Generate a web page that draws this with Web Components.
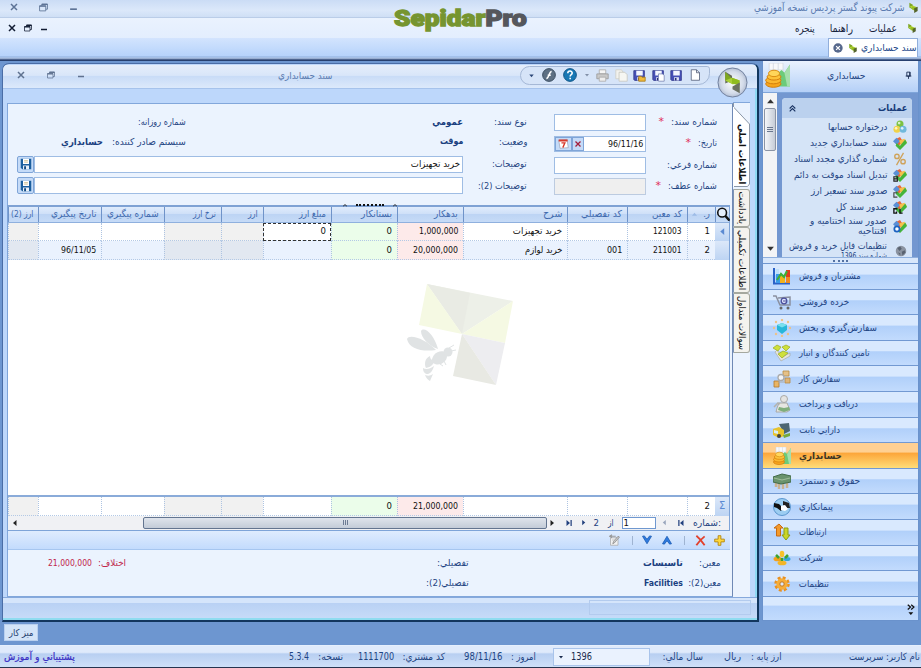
<!DOCTYPE html>
<html lang="fa">
<head>
<meta charset="utf-8">
<title>Sepidar</title>
<style>
  html, body { margin: 0; height: 100%; overflow: hidden; }
  body { font: 9.5px/12px "DejaVu Sans Condensed", "DejaVu Sans", sans-serif; color: #1f4583; }
</style>
</head>
<body>
<sepidar-app></sepidar-app>

<script>
const floppy = `<path d="M1 2h13v12H2l-1-1z" fill="#4650b5" stroke="#343a8c"/><path d="M4 2h8v6H4z" fill="#f3f6ff"/><path d="M5 10h6v4H5z" fill="#dfe4f5"/><path d="M6 11h2v3H6z" fill="#2a2f7c"/>`;
const ledger = `<path d="M2 4l6-3 4 6-6 4z" fill="#e8663c"/><path d="M0 6l4-4 4 4-4 4z" fill="#5b8fd6"/><path d="M7 5l6-2 3 4-6 6z" fill="#f4c04a"/><path d="M4 8l4 3 6-7 2 4-8 8-5-5z" fill="#45b53a"/>`;

const ICONS = {
  logo: `<path d="M2 1l5 3v7l-5-3z" fill="#7ea624"/><path d="M2 7l5-2 7 3-4 3z" fill="#b3d335"/><path d="M6 6l5 2v5l-5-2z" fill="#97c022"/><path d="M9 9l5-2v6l-5 3z" fill="#55652c"/>`,
  orb: `<defs><radialGradient id="g"><stop offset="0" stop-color="#fff"/><stop offset=".75" stop-color="#d3dbe9"/><stop offset="1" stop-color="#b5c0d4"/></radialGradient></defs><circle cx="16" cy="16" r="15" fill="url(#g)" stroke="#6f7f9d"/><path d="M8.500 5l7 4v5l-7 3z" fill="#666d5c"/><path d="M8.500 5v9l7 3v-5z" fill="#7fa81e"/><path d="M8.500 14l7-3 8 3-7 4z" fill="#a9cf38"/><path d="M15.500 11l8 3v5l-8-2z" fill="#8fbc1f"/><path d="M16 20l7.500-4v11l-7.500-4z" fill="#6b7162"/>`,
  pin: `<path d="M5 2h6v7H5zM3 9h10M8 9v5M10 2v7" fill="none" stroke="#1c2f55" stroke-width="1.6"/>`,
  doc: `<path d="M3 1h7l4 4v10H3z" fill="#fff" stroke="#46516d"/><path d="M10 1v4h4" fill="none" stroke="#46516d"/>`,
  save: floppy,
  saveDoc: floppy + `<path d="M8 6h5l2 2v7H8z" fill="#fff" stroke="#7a86b5"/>`,
  saveFolder: floppy + `<path d="M7 9h3l1 1h4v5H7z" fill="#f0b93a" stroke="#a87b1b"/>`,
  copy: `<path d="M1 1h7l2 3v8H1z" fill="#f2f2ee" stroke="#cfcfc8"/><path d="M5 4h7l3 3v8H5z" fill="#f6f6f2" stroke="#c6c6bf"/>`,
  print: `<path d="M4 1h8v5H4z" fill="#f5f5f5" stroke="#aaa"/><path d="M1 6h14v6H1z" fill="#c9c9c9" stroke="#999"/><path d="M4 10h8v5H4z" fill="#eee" stroke="#aaa"/>`,
  help: `<circle cx="8" cy="8" r="7.3" fill="#1878b4" stroke="#0c4f80"/><path d="M5.5 6c0-3.4 5-3.2 5-.4 0 2-2.3 1.8-2.3 4M8.2 11.2v1.6" fill="none" stroke="#fff" stroke-width="1.8"/>`,
  flash: `<circle cx="8" cy="8" r="7.3" fill="#5d7084" stroke="#34475c"/><path d="M11 4c-3 0-3 8-6 8M6.5 8.3h3.5" fill="none" stroke="#fff" stroke-width="1.8"/>`,
  down: `<path d="M4 6h8l-4 5z" fill="currentColor"/>`,
  right: `<path d="M5 2l7 6-7 6z" fill="currentColor"/>`,
  left: `<path d="M11 2l-7 6 7 6z" fill="currentColor"/>`,
  upTri: `<path d="M2 11h12L8 4z" fill="currentColor"/>`,
  downTri: `<path d="M2 5h12l-6 7z" fill="currentColor"/>`,
  last: `<path d="M3 2l7 6-7 6zM11 2h2.5v12H11z" fill="currentColor"/>`,
  first: `<path d="M13 2L6 8l7 6zM2.5 2H5v12H2.5z" fill="currentColor"/>`,
  close: `<path d="M2 2l12 12M14 2L2 14" stroke="currentColor" stroke-width="3"/>`,
  restore: `<path d="M5 5V2h10v9h-3M1 5h11v9H1z" fill="none" stroke="currentColor" stroke-width="1.5"/><path d="M1 5.5h11M5 2.5h10" stroke="currentColor" stroke-width="2.5"/>`,
  min: `<path d="M2 11h12" stroke="currentColor" stroke-width="3"/>`,
  closeDot: `<circle cx="8" cy="8" r="7.5" fill="#56688c"/><path d="M5 5l6 6M11 5l-6 6" stroke="#fff" stroke-width="2"/>`,
  chevUp: `<path d="M3 8l5-5 5 5M3 13l5-5 5 5" fill="none" stroke="#16305f" stroke-width="2"/>`,
  search: `<circle cx="7" cy="6.5" r="5" fill="#e5effd" stroke="#111" stroke-width="1.8"/><path d="M10.5 10l5 5.5" stroke="#111" stroke-width="2.8"/>`,
  disk: `<path d="M1 1h14v14H3l-2-2z" fill="#1c5f9e"/><path d="M4 1h8v7H4z" fill="#fff"/><path d="M5.5 3.5h5M5.5 5.5h5" stroke="#c6b37c"/><path d="M4 10h8v5H4z" fill="#e8f0fa"/><path d="M5.5 11h2.5v4H5.5z" fill="#134a80"/>`,
  calendar: `<path d="M1 3l12-1 2 12-12 1z" fill="#fff" stroke="#9a9fb4"/><path d="M1 2h13v3H1z" fill="#d8392c"/><path d="M5 7h5l-3 7" fill="none" stroke="#d8392c" stroke-width="2"/>`,
  redX: `<path d="M3 3l10 10M13 3L3 13" stroke="#a31f3c" stroke-width="2.6"/>`,
  plus: `<path d="M6 1h4v5h5v4h-5v5H6v-5H1V6h5z" fill="#ffd83c" stroke="#b28410" stroke-width="1.3"/>`,
  del: `<path d="M2 1c5 4 8 8 12 14M14 2C9 6 5 10 2 15" fill="none" stroke="#e2402c" stroke-width="2.6"/>`,
  up: `<path d="M2 13L8 3l6 10-2.500.500L8 9l-3.500 4.500z" fill="#2f7be0" stroke="#1757ae"/>`,
  dn: `<path d="M2 3l6 10 6-10-2.500-.500L8 7 4.500 2.500z" fill="#2f7be0" stroke="#1757ae"/>`,
  edit: `<path d="M2 5h10v10H2z" fill="#f1f1f1" stroke="#aaa"/><path d="M1 3h8M4 1L1 3l3 2" fill="none" stroke="#999" stroke-width="1.5"/><path d="M14 4l-7 8-2 1 1-3 6-7z" fill="#ccc" stroke="#888"/><path d="M4 8h5" stroke="#bbb"/>`,
  balls: `<circle cx="8" cy="4.5" r="4" fill="#7cc142"/><circle cx="4.5" cy="10.5" r="4" fill="#f0d24a"/><circle cx="11.5" cy="10.5" r="4" fill="#6fb8dc"/><circle cx="7" cy="3.5" r="1.5" fill="#d8f2c0"/><circle cx="3.5" cy="9.5" r="1.5" fill="#fff5c0"/><circle cx="10.5" cy="9.5" r="1.5" fill="#dff3fc"/>`,
  ledger,
  percent: `<circle cx="4.5" cy="5" r="2.5" fill="none" stroke="#cfa35c" stroke-width="1.6"/><circle cx="11.5" cy="11" r="2.5" fill="none" stroke="#cfa35c" stroke-width="1.6"/><path d="M12 1L4 15" stroke="#cfa35c" stroke-width="1.5"/>`,
  ledgerB: ledger + `<path d="M1 10h4v5H1zM1 12.500h4" fill="none" stroke="#222" stroke-width="1.3"/>`,
  ledgerC: ledger + `<path d="M5 10H1v5h4" fill="none" stroke="#444" stroke-width="1.3"/>`,
  ledgerG: ledger + `<path d="M5 10H1v5h3v-2M8 10v5h3" fill="none" stroke="#111" stroke-width="1.5"/>`,
  ledgerO: ledger + `<circle cx="4.5" cy="11.5" r="3" fill="#fff" stroke="#1d63c0" stroke-width="2"/>`,
  globe: `<circle cx="8" cy="8" r="7" fill="#8b93a0"/><path d="M3 4l4-2 2 3-3 3zM9 9l4-2 1 3-4 4zM4 10l3 1v3z" fill="#596270"/>`,
  coins: `<path d="M3 0h10v12H3z" fill="#f8f9fb" stroke="#d3d9e2" stroke-width=".6"/><path d="M6 0v12M9.500 0v12M3 5h10" stroke="#d3d9e2" stroke-width=".6"/><path d="M8 17V8l4-3 2 2 4-6v16z" fill="#6ccb7a"/><path d="M14 7l4-6v16h-2z" fill="#a5dfac"/><ellipse cx="6" cy="15" rx="5.5" ry="2.5" fill="#f7a51c" stroke="#d27d0c" stroke-width=".7"/><ellipse cx="6" cy="12.5" rx="5.5" ry="2.5" fill="#fbb830" stroke="#d27d0c" stroke-width=".7"/><ellipse cx="6.500" cy="10" rx="5" ry="2.300" fill="#fcc23a" stroke="#d27d0c" stroke-width=".7"/><ellipse cx="6.500" cy="7.500" rx="4" ry="2.300" fill="#ffd65a" stroke="#d98b10" stroke-width=".7"/>`,
  chart: `<path d="M1 1v15.500h16" fill="none" stroke="#2a62c8" stroke-width="2"/><path d="M2.500 2H6v5H2.500z" fill="#bfe0fa"/><path d="M3 7h4v9H3z" fill="#3a9be8"/><path d="M7 9h5v7H7z" fill="#f2b21c"/><path d="M13 3h4v7h-4z" fill="#e03c1c"/><path d="M13 10h4v6h-4z" fill="#f08a1c"/><path d="M4 13l4-6 3 3 3-6" fill="none" stroke="#3fae35" stroke-width="2.2"/>`,
  cart: `<path d="M0 3l3 0 4 9h9M5 5l12-1v8H8" fill="none" stroke="#8a90a0" stroke-width="1.5"/><circle cx="11" cy="8" r="2.8" fill="#dfe3fa" stroke="#4b4f9c" stroke-width="1.3"/><path d="M10 8h3" stroke="#4b4f9c"/><circle cx="8" cy="15" r="1.5" fill="#666"/><circle cx="15" cy="15" r="1.5" fill="#666"/>`,
  spread: `<path d="M4 6l5-2 5 2v5l-5 4-5-4z" fill="#27b7da"/><path d="M4 6l5 2.500L14 6 9 4z" fill="#7ae0ee"/><g fill="#ecc288"><circle cx="9" cy="1" r="1.2"/><circle cx="3" cy="3" r="1.2"/><circle cx="15" cy="3" r="1.2"/><circle cx="1" cy="9" r="1.2"/><circle cx="17" cy="9" r="1.2"/><circle cx="3" cy="15" r="1.2"/><circle cx="15" cy="15" r="1.2"/><circle cx="9" cy="17" r="1.2"/></g>`,
  boxes: `<path d="M2 8l6 9 9-5v-3L9 13 4 6z" fill="#e4e4dc" stroke="#a5a59c" stroke-width=".6"/><path d="M0 4l4-3 4 2-3 4zM9 3l4-2 4 2-4 4zM5 10l5-3 5 2-6 5z" fill="#cfe03c" stroke="#9aac1f" stroke-width=".7"/>`,
  order: `<path d="M10 1h6v5h-6z" fill="#e5c188" stroke="#b98b43" stroke-width=".8"/><path d="M1 11h5v6H1z" fill="#e9b565" stroke="#b3792b" stroke-width=".8"/><path d="M12 8h5v5h-5z" fill="#ddb57a" stroke="#b98b43" stroke-width=".8"/><circle cx="8" cy="7.5" r="3" fill="#f4f4f4" stroke="#aaa" stroke-width="1.3"/><path d="M5 12h6" stroke="#aaa"/>`,
  people: `<circle cx="11" cy="4" r="3.500" fill="#e4e4e2" stroke="#a9a9a6"/><path d="M6 8h8l3 7-3 2H3l1-4z" fill="#e6e6e2" stroke="#a9a9a6"/><path d="M6 12l5 1 5-1 1 3-6 2-6-2z" fill="#7fae7c"/><path d="M1 12l4-4 2 1" fill="none" stroke="#b2b2ae" stroke-width="1.5"/>`,
  truck: `<path d="M6 3l10-1 1 8-6 3z" fill="#4c6673"/><path d="M0 8l6-2 5 3v6l-5 2-6-3z" fill="#e8c32c"/><path d="M1 9l4 1v3l-4-1z" fill="#d6edf6"/><circle cx="6" cy="15" r="2" fill="#444"/><path d="M10 14l7-2v3l-6 2z" fill="#77a83c"/>`,
  money: `<path d="M3 10v5M6 11v6M10 12v5M14 11v5" stroke="#c9b291" stroke-width="2.5"/><path d="M0 5l9-3 9 2v6l-10 2-8-2z" fill="#6a936c" stroke="#436b49"/><path d="M1 6l8 2 8-2" fill="none" stroke="#9fbc98" stroke-width="1.2"/>`,
  shake: `<circle cx="9" cy="9" r="8.500" fill="#9ccdf2" stroke="#5c97cf"/><path d="M1 5l5 1 4 4-2 3-4-3-3-1z" fill="#111"/><path d="M10 3l6 2 1 5-3 0-4-3z" fill="#222"/><path d="M8 8l4-1 3 4-3 2-4-1z" fill="#fff"/>`,
  arrows: `<path d="M6 1L1 5h2.500v8h4V5H10z" fill="#f39a2c" stroke="#c86b10"/><path d="M13 17l4-5h-2V5h-4v7H9z" fill="#c9d628" stroke="#8d9c12"/>`,
  company: `<ellipse cx="4.500" cy="10" rx="4" ry="2.300" fill="#f2a11c"/><ellipse cx="14" cy="10" rx="3.500" ry="2" fill="#35a6dd"/><ellipse cx="9" cy="14" rx="4.500" ry="2.300" fill="#f3b628"/><ellipse cx="9" cy="5" rx="2.300" ry="3.300" fill="#f7c12b"/><path d="M3 6l3 3M15 6l-3 3M9 9v3" stroke="#3fa22f" stroke-width="2.600"/>`,
  gear: `<circle cx="9" cy="9" r="6" fill="none" stroke="#e9901e" stroke-width="3.500" stroke-dasharray="2.700 2"/><circle cx="9" cy="9" r="4" fill="none" stroke="#f6ad38" stroke-width="3.300"/><circle cx="9" cy="9" r="2.200" fill="#dbe8fb" stroke="#c8720e"/>`,
  more: `<path d="M4 1l4 3.500L4 8M9 1l4 3.500L9 8" fill="none" stroke="#111" stroke-width="1.8"/><path d="M5 12h7l-3.500 4z" fill="#111"/>`
};

const BIG = ['coins', 'chart', 'cart', 'spread', 'boxes', 'order', 'people', 'truck', 'money', 'shake', 'arrows', 'company', 'gear'];

class UiIcon extends HTMLElement {
  connectedCallback() {
    if (this.shadowRoot) return;
    const name = this.getAttribute('name');
    const size = this.getAttribute('size') || 12;
    const box = name === 'orb' ? 32 : BIG.includes(name) ? 18 : 16;
    this.attachShadow({ mode: 'open' }).innerHTML = `
      <style>
        :host { display: block; flex: none; width: ${size}px; height: ${size}px; }
        svg { display: block; }
      </style>
      <svg width="${size}" height="${size}" viewBox="0 0 ${box} ${box}">${ICONS[name]}</svg>`;
  }
}
customElements.define('ui-icon', UiIcon);

// Text that keeps a fixed column width: the glyph run is condensed or stretched to "w".
class FitLabel extends HTMLElement {
  connectedCallback() {
    if (this.shadowRoot) return;
    const w = Number(this.getAttribute('w'));
    const ltr = this.hasAttribute('ltr');
    this.attachShadow({ mode: 'open' }).innerHTML = `
      <style>
        :host { display: block; flex: none; width: ${w}px; white-space: nowrap; direction: ${ltr ? 'ltr' : 'rtl'}; }
        span { display: inline-block; transform-origin: ${ltr ? '0' : '100%'} 50%; }
      </style>
      <span><slot></slot></span>`;
    const span = this.shadowRoot.querySelector('span');
    span.style.transform = `scaleX(${w / span.offsetWidth})`;
  }
}
customElements.define('fit-label', FitLabel);

const label = (text, w, style = '') => `<fit-label w="${w}" style="${style}">${text}</fit-label>`;
const icon = (name, size, style = '') => `<ui-icon name="${name}" size="${size}" style="${style}"></ui-icon>`;

class AppHeader extends HTMLElement {
  constructor() {
    super();
    this.attachShadow({ mode: 'open' }).innerHTML = `
      <style>
        :host { display: block; height: 61px; direction: rtl; position: relative; }
        .row { display: flex; align-items: center; box-sizing: border-box; }
        .title { height: 18px; padding: 0 2px 3px 10px; background: linear-gradient(#cbdcf5, #dbe8fa 60%, #cfdff5); border-bottom: 1px solid #bacde8; color: #5a7bb0; font-size: 10.5px; }
        .menu { height: 20px; padding: 0 4px 0 8px; background: linear-gradient(#eaf2fe, #e3eefe); color: #17233c; font-size: 10.5px; }
        .tabs { height: 23px; padding: 0 3px 4px 0; background: linear-gradient(#d3e4fe, #b6d3fb 18px, #8eaedb 19px, #bdd2f1 20px, #27406f 22px); }
        .tab { display: flex; align-items: center; box-sizing: border-box; width: 90px; height: 19px; padding: 0; background: #fff; border: 1px solid #91aedb; border-bottom: 0; color: #24498a; }
        .ctl { display: flex; align-items: center; margin-right: auto; flex-direction: row-reverse; }
        .title .ctl { gap: 21px; color: #5d7396; }
        .menu .ctl { gap: 8px; color: #111c33; }
        .brand { position: absolute; left: 394px; top: 5px; font: 900 22.500px/26px Roboto, sans-serif; -webkit-text-stroke: 1.3px; color: #769530; }
        .brand b { color: #55575c; font-weight: 900; -webkit-text-stroke-color: #55575c; }
      </style>
      <div class="row title">${icon('logo', 11)}${label('شرکت پيوند گستر پرديس نسخه آموزشي', 151, 'margin-right:3px')}
        <div class="ctl">${icon('close', 8)}${icon('restore', 9)}${icon('min', 9)}</div></div>
      <div class="row menu">${icon('logo', 10)}${label('عمليات', 28, 'margin-right:10px')}${label('راهنما', 23, 'margin-right:16px')}${label('پنجره', 20, 'margin-right:15px')}
        <div class="ctl">${icon('close', 8)}${icon('restore', 8)}${icon('min', 8)}</div></div>
      <div class="row tabs"><div class="tab">${label('سند حسابداري', 56)}${icon('logo', 10, 'margin-right:3px')}${icon('closeDot', 10, 'margin-right:5px')}</div></div>
      <div class="brand"><fit-label w="133" ltr>Sepidar<b>Pro</b></fit-label></div>`;
  }
}
customElements.define('app-header', AppHeader);

class DocToolbar extends HTMLElement {
  constructor() {
    super();
    this.attachShadow({ mode: 'open' }).innerHTML = `
      <style>
        :host { display: flex; align-items: center; box-sizing: border-box; height: 24px; padding: 0 11px 3px 12px; position: relative; direction: ltr;
          background: linear-gradient(#e5eefb, #d9e6f9 45%, #c9dcf7 50%, #dce9fb); border-bottom: 1px solid #a6c3ec; color: #5f7290; }
        .title { margin-left: 193px; padding-top: 1px; color: #5a7bb0; }
        .pill { display: flex; align-items: center; justify-content: space-between; box-sizing: border-box; width: 190px; height: 19px; margin-left: 187px; padding: 0 3px 0 6px;
          background: #d6e4f8; border: 1px solid #a5b8d6; border-radius: 10px 3px 12px 10px; color: #2a4677; }
        .orb { position: absolute; left: 714px; top: 2px; z-index: 2; }
      </style>
      ${icon('close', 8, 'margin-left:2px')}${icon('restore', 8, 'margin-left:22px')}${icon('min', 8, 'margin-left:22px')}
      <div class="title">${label('سند حسابداري', 55)}</div>
      <div class="pill">${icon('down', 9)}${icon('flash', 14)}${icon('help', 14, 'margin-left:2px')}${icon('down', 8, 'color:#8290a8')}${icon('print', 13)}${icon('copy', 13)}${icon('saveFolder', 13)}${icon('saveDoc', 13)}${icon('save', 13)}${icon('doc', 12)}<span></span></div>
      <div class="orb">${icon('orb', 31)}</div>`;
  }
}
customElements.define('doc-toolbar', DocToolbar);

class VoucherForm extends HTMLElement {
  constructor() {
    super();
    const star = '<i>*</i>';
    this.attachShadow({ mode: 'open' }).innerHTML = `
      <style>
        :host { display: grid; direction: rtl; box-sizing: border-box; height: 101px; padding: 7px 15px 8px 11px;
          grid-template-columns: 71px 92px 27px 64px 277px 169px; grid-template-rows: 22px 21px 22px 21px; align-items: center; }
        .lab, .val { display: flex; align-items: center; }
        i { color: #e0305a; font: 11px/8px "DejaVu Sans"; margin-right: 7px; }
        .box { display: flex; align-items: center; box-sizing: border-box; height: 17px; background: #fff; border: 1px solid #9fbde4; color: #111; padding-right: 2px; }
        .off { background: #efefef; border-color: #bccbe0; }
        .date { height: 16px; }
        .wide { grid-column: span 2; display: flex; align-items: center; position: relative; top: -1px; }
        .wide .box { flex: 1; }
        .b { font-weight: bold; color: #1a3f80; }
        .btn { display: flex; align-items: center; justify-content: center; box-sizing: border-box; width: 17px; height: 17px; background: #c5dbf8; border: 1px solid #7fa5d8; border-radius: 2px; }
        .date .btn { height: 14px; border-radius: 0; width: 12px; }
        .date .btn:last-child { width: 17px; }
      </style>
      <div class="lab">${label('شماره  سند:', 46)}${star}</div><div class="box"></div><span></span>
      <div class="lab">${label('نوع سند:', 33)}</div><div class="val b">${label('عمومي', 31)}</div>
      <div class="lab">${label('شماره روزانه:', 48)}</div>

      <div class="lab" style="margin-top:-1px">${label('تاريخ:', 19)}${star}</div>
      <div class="box date">${label('96/11/16', 35)}<div class="btn" style="margin-right:auto">${icon('redX', 8)}</div><div class="btn">${icon('calendar', 11)}</div></div><span></span>
      <div class="lab" style="margin-top:-3px">${label('وضعيت:', 28)}</div><div class="val b" style="margin-top:-5px">${label('موقت', 23)}</div>
      <div class="lab" style="margin-top:-3px">${label('سيستم صادر کننده:', 74)}<div class="b">${label('حسابداري', 42, 'margin-right:9px')}</div></div>

      <div class="lab">${label('شماره فرعي:', 50)}</div><div class="box"></div><span></span>
      <div class="lab" style="margin-top:-2px">${label('توضيحات:', 35)}</div>
      <div class="wide"><div class="box">${label('خريد تجهيزات', 49)}</div><div class="btn">${icon('disk', 12)}</div></div>

      <div class="lab" style="margin-top:-1px">${label('شماره  عطف:', 49)}${star}</div><div class="box off"></div><span></span>
      <div class="lab" style="margin-top:-1px">${label('توضيحات (2):', 49)}</div>
      <div class="wide"><div class="box"></div><div class="btn">${icon('disk', 12)}</div></div>`;
  }
}
customElements.define('voucher-form', VoucherForm);

// [heading, heading width, tint class]
const COLUMNS = [
  ['ر.', 7, ''], ['کد معين', 30, ''], ['کد تفصيلي', 41, ''], ['شرح', 19, ''], ['بدهکار', 24, 'debit'],
  ['بستانکار', 31, 'credit'], ['مبلغ ارز', 27, ''], ['ارز', 10, 'off'], ['نرخ ارز', 23, 'off'],
  ['شماره پيگيري', 52, ''], ['تاريخ پيگيري', 45, ''], ['ارز (2)', 22, 'off']
];
const ROWS = [
  [['1', 5], ['121003', 29], 0, ['خريد تجهيزات', 49], ['1,000,000', 39], ['0', 5], ['0', 5], 0, 0, 0, 0, 0],
  [['2', 5], ['211001', 29], ['001', 15], ['خريد لوازم', 37], ['20,000,000', 45], ['0', 5], 0, 0, 0, 0, ['96/11/05', 35], 0]
];
const TOTALS = [['2', 5], 0, 0, 0, ['21,000,000', 45], ['0', 5], 0, 0, 0, 0, 0, 0];

class VoucherGrid extends HTMLElement {
  constructor() {
    super();
    const cells = (row) => row.map((c, i) => `<div class="${COLUMNS[i][2]}">${c ? label(c[0], c[1]) : ''}</div>`).join('');
    this.attachShadow({ mode: 'open' }).innerHTML = `
      <style>
        :host { display: flex; flex-direction: column; direction: rtl; box-sizing: border-box; width: 723px; height: 326px; margin-left: -1px; position: relative; background: #fff; border: 1px solid #7ea4d8; border-top: 2px solid #7fa2d4; color: #111; }
        .line { display: grid; grid-template-columns: 14px 28px 60px 60px 104px 66px 66px 68px 42px 57px 63px 63px 30px; height: 18.5px; flex: none; }
        .line > div { display: flex; align-items: center; box-sizing: border-box; padding-right: 5px; border-left: 1px dotted #aec4e2; border-bottom: 1px dotted #b3c9e6; }
        .line > .sel { padding: 0; justify-content: center; background: linear-gradient(#dce8f9, #bdd4f3); border: 0; color: #5b8ad2; }
        .line.head { height: 14.5px; background: linear-gradient(#e0ecfc, #cfe0f8 45%, #bdd4f4 50%, #c6dbf7); border-bottom: 1px solid #8fb0de; color: #3d68ad; }
        .head > div { border-bottom: 0; border-left: 1px solid #6f93c9; }
        .line.head > .sel { background: none; border-left: 1px solid #6f93c9; }
        .alt { background: #eaf2fe; }
        .line:not(.head) .debit { background: #fdeaea; }
        .line:not(.head) .credit { background: #ebfdea; }
        .line:not(.head) .off { background: #f1f1f1; }
        .alt.line .off { background: #e2e8f1 !important; }
        .focus > div:nth-child(8) { outline: 1px dashed #333; outline-offset: -1px; }
        .space { flex: 1; display: flex; justify-content: center; align-items: flex-start; }
        .line.sum { height: 18.5px; border-top: 2px solid #8aabd9; }
        .nav { display: flex; align-items: center; box-sizing: border-box; height: 14.5px; flex: none; padding: 0 8px 0 3px; background: #f0f1f4; color: #23417e; }
        .page { box-sizing: border-box; width: 34px; height: 12px; padding-right: 26px; background: #fff; border: 1px solid #6f98d0; color: #111; line-height: 10px; margin-right: 5px; }
        .thumb { box-sizing: border-box; width: 404px; height: 12px; margin-right: 1px; background: linear-gradient(#dfe4ec, #c3ccd8); border: 1px solid #637590; border-radius: 2px; display: flex; align-items: center; justify-content: center; gap: 1px; }
        .thumb b { width: 1px; height: 5px; background: #6d7b93; }
        .grip { position: absolute; left: 335px; top: -4px; width: 54px; height: 4px; display: flex; justify-content: space-between; align-items: center; }
        .grip i { width: 28px; border-top: 2px dotted #111; }
      </style>
      <div class="grip"><svg width="4" height="3"><path d="M0 2.500l2-2 2 2" fill="none" stroke="#222"/></svg><i></i><svg width="4" height="3"><path d="M0 2.500l2-2 2 2" fill="none" stroke="#222"/></svg></div>
      <div class="line head"><div class="sel">${icon('search', 14)}</div>${COLUMNS.map((c, i) => `<div>${label(c[0], c[1])}${i ? '' : icon('upTri', 7, 'margin-right:5px;color:#9dbbe6')}</div>`).join('')}</div>
      <div class="line focus"><div class="sel">${icon('left', 9)}</div>${cells(ROWS[0])}</div>
      <div class="line alt"><div class="sel"></div>${cells(ROWS[1])}</div>
      <div class="space">
        <svg width="110" height="110" style="margin:22px -186px 0 0" viewBox="0 0 110 110">
          <path d="M20 2l86 17-51 33z" fill="#edf0e8"/><path d="M20 2l43 9-8 41z" fill="#e9ebe4"/>
          <path d="M20 2l35 50-43-9zM106 19l-8 42-43-9z" fill="#f5f9e3"/>
          <path d="M55 52l43 9-9 42z" fill="#ededf0"/><path d="M55 52l34 51-43-9z" fill="#e8e9e3"/>
          <g fill="#e0e3e4">
            <path d="M0 57c2-6 19 0 29 11-14 2-27-1-29-11z"/><path d="M14 49c3-5 13 3 17 18-9-3-17-11-17-18z"/>
            <path d="M27 73c4-5 13-5 13 1s-7 10-12 8-3-6-1-9z"/><circle cx="41" cy="70" r="4.500"/>
            <path d="M23 74c-5 2-6 8-4 12 5-1 8-4 8-7-3-1-4-3-4-5z"/><path d="M16 86c0 4 2 6 5 6 3-1 5-4 6-8-4 3-8 4-11 2z"/><path d="M18 93c1 3 3 5 5 6 1-2 2-5 3-7-3 2-5 2-8 1z"/>
          </g>
          <path d="M42 66l5-3M44 69l5-1M37 79l2 4M33 82l3 2" stroke="#e0e3e4" fill="none"/>
        </svg>
      </div>
      <div class="line sum"><div class="sel" style="font-size:11px">Σ</div>${cells(TOTALS)}</div>
      <div class="nav">${label(':شماره', 28)}${icon('first', 8, 'margin-right:8px')}${icon('left', 7, 'margin-right:9px;color:#9aa6bd')}
        <div class="page">${label('1', 5)}</div>${label('از', 6, 'margin-right:8px')}${label('2', 5, 'margin-right:9px')}${icon('right', 7, 'margin-right:7px')}${icon('last', 8, 'margin-right:7px')}${icon('right', 8, 'margin-right:9px;color:#222')}
        <div class="thumb"><b></b><b></b><b></b></div>${icon('left', 8, 'margin-right:auto;color:#222')}</div>`;
  }
}
customElements.define('voucher-grid', VoucherGrid);

class VoucherDetails extends HTMLElement {
  constructor() {
    super();
    this.attachShadow({ mode: 'open' }).innerHTML = `
      <style>
        :host { display: block; direction: rtl; }
        .bar { display: flex; align-items: center; height: 19px; width: 722px; margin-right: 2px; box-sizing: border-box; padding-right: 5px; background: linear-gradient(#dfecfe, #c3dbfd); border-bottom: 1px solid #a6c6f0; }
        .bar s { width: 1px; height: 9px; background: #9fb4d2; }
        .info { display: grid; grid-template-columns: 252px 343px 1fr; grid-template-rows: 20px 20px; align-items: center; padding: 3px 11px 0 0; }
        .info > div { display: flex; }
        b { color: #1a3f80; }
        .red { color: #c0264c; }
      </style>
      <div class="bar">${icon('plus', 11)}${icon('del', 11, 'margin-right:8px')}<s style="margin-right:10px"></s>${icon('up', 12, 'margin-right:11px')}${icon('dn', 12, 'margin-right:8px')}<s style="margin-right:8px"></s>${icon('edit', 12, 'margin-right:11px')}</div>
      <div class="info">
        <div>${label('معين:', 22)}<b>${label('تاسيسات', 40, 'margin-right:16px')}</b></div>
        <div>${label('تفصيلي:', 32)}</div>
        <div class="red">${label('اختلاف:', 28)}${label('21,000,000', 44, 'margin-right:6px')}</div>
        <div>${label('معين(2):', 33)}<b>${label('Facilities', 39, 'margin-right:5px')}</b></div>
        <div>${label('تفصيلي(2):', 43)}</div>
      </div>`;
  }
}
customElements.define('voucher-details', VoucherDetails);

class SideTabs extends HTMLElement {
  constructor() {
    super();
    this.attachShadow({ mode: 'open' }).innerHTML = `
      <style>
        :host { display: flex; flex-direction: column; width: 17px; color: #111; }
        .tab { display: flex; align-items: center; justify-content: center; box-sizing: border-box; width: 17px; background: #f4f3ee; border: 1px solid #a5a89f; border-left-color: #7c93b5; border-radius: 0 3px 3px 0; flex: none; }
        .tab fit-label { transform: rotate(90deg); }
        .on { position: relative; height: 84px; margin-bottom: 2px; background: none; border: 0; padding-top: 18px; font-weight: bold; }
        .on svg { position: absolute; left: 0; top: 0; }
        .on fit-label { z-index: 1; }
      </style>
      <div class="tab on"><svg width="17" height="84"><path d="M.5 0v4L16.500 21v60l-2 2.500H.5z" fill="#fff" stroke="#8a97a8"/><path d="M.5 4v80" stroke="#fff"/></svg>${label('اطلاعات اصلي', 60)}</div>
      <div class="tab" style="height:38px">${label('يادداشت', 33)}</div>
      <div class="tab" style="height:66px">${label('اطلاعات تکميلي', 60)}</div>
      <div class="tab" style="height:60px">${label('سوالات متداول', 54)}</div>`;
  }
}
customElements.define('side-tabs', SideTabs);

class DocWindow extends HTMLElement {
  constructor() {
    super();
    this.attachShadow({ mode: 'open' }).innerHTML = `
      <style>
        :host { display: flex; flex-direction: column; box-sizing: border-box; width: 757px; height: 559px; margin-left: 2px; background: #bdd7fb; border: 1px solid #4a6da6; border-right: 2px solid #12365e; border-bottom: 2px solid #12365e; border-radius: 7px 7px 0 0; overflow: hidden; box-shadow: inset -2px -2px #8fd9f3; }
        doc-toolbar { margin-top: 1px; }
        .main { display: flex; margin: 14px 8px 0 4px; height: 494px; }
        .panel { box-sizing: border-box; width: 726px; flex: none; background: #ebf3fe; border: 1px solid #82a7db; border-right-color: #6f89b5; }
        side-tabs { background: #ebf3fe; box-shadow: 0 -1px #82a7db; }
        .foot { flex: 1; display: flex; justify-content: flex-end; padding: 2px 6px 3px; background: linear-gradient(#d5e5fb 25%, #b9d1f4 26%, #c6dbf8); border-top: 1px solid #86a9dc; border-bottom: 2px solid #8fdcf0; }
        .foot div { width: 160px; border: 1px solid #b3cbee; }
      </style>
      <doc-toolbar></doc-toolbar>
      <div class="main">
        <div class="panel"><voucher-form></voucher-form><voucher-grid></voucher-grid><voucher-details></voucher-details></div>
        <side-tabs></side-tabs>
      </div>
      <div class="foot"><div></div></div>`;
  }
}
customElements.define('doc-window', DocWindow);

class TaskPane extends HTMLElement {
  constructor() {
    super();
    const tasks = [
      ['balls', 'درختواره حسابها', 59], ['ledger', 'سند حسابداري جديد', 77], ['percent', 'شماره گذاري مجدد اسناد', 93],
      ['ledgerB', 'تبديل اسناد موقت به دائم', 93], ['ledgerC', 'صدور سند تسعير ارز', 76], ['ledgerG', 'صدور سند کل', 51]
    ];
    this.attachShadow({ mode: 'open' }).innerHTML = `
      <style>
        :host { display: flex; height: 164px; background: #7397d0; overflow: hidden; }
        .bar { box-sizing: border-box; width: 14px; padding: 4px 1px; background: #f3f4f6; display: flex; flex-direction: column; align-items: center; color: #333; }
        .thumb { box-sizing: border-box; width: 12px; height: 43px; margin: 2px 0 auto; border: 1px solid #8b94a5; border-radius: 2px; background: linear-gradient(90deg, #f4f6f9, #c6ccd7); display: flex; flex-direction: column; gap: 1px; align-items: center; justify-content: center; }
        .thumb b { width: 6px; height: 1px; background: #6a778e; }
        .card { width: 130px; height: 170px; margin: 5px 0 0 5px; background: #d5e4f7; border-radius: 4px 4px 0 0; overflow: hidden; direction: rtl; }
        .head { display: flex; align-items: center; justify-content: space-between; height: 20px; padding: 0 5px 0 6px; background: #bbd1ee; font-weight: bold; color: #173a78; }
        .task { display: flex; align-items: center; height: 16px; gap: 6px; padding-right: 5px; }
        .two { height: auto; line-height: 10px; padding-top: 1px; margin-bottom: 4px; }
      </style>
      <div class="bar">${icon('upTri', 9)}<div class="thumb"><b></b><b></b><b></b></div>${icon('downTri', 9)}</div>
      <div class="card">
        <div class="head">${label('عمليات', 29)}${icon('chevUp', 9)}</div>
        <div style="height:1px"></div>
        ${tasks.map(t => `<div class="task">${icon(t[0], 14)}${label(t[1], t[2])}</div>`).join('')}
        <div class="task two">${icon('ledgerO', 14)}<div>${label('صدور سند اختتاميه و', 77)}${label('افتتاحيه', 29)}</div></div>
        <div class="task two">${icon('globe', 12, 'margin-left:2px')}<div>${label('تنظيمات فايل خريد و فروش', 98)}${label('شماره سند 1396', 46)}</div></div>
      </div>`;
  }
}
customElements.define('task-pane', TaskPane);

class NavPane extends HTMLElement {
  constructor() {
    super();
    const groups = [
      ['chart', 'مشتريان و فروش', 62], ['cart', 'خرده فروشي', 50], ['spread', 'سفارش‌گيري و پخش', 78], ['boxes', 'تامين کنندگان و انبار', 71],
      ['order', 'سفارش کار', 41], ['people', 'دريافت و پرداخت', 59], ['truck', 'دارايي ثابت', 41], ['coins', 'حسابداري', 43],
      ['money', 'حقوق و دستمزد', 61], ['shake', 'پيمانکاري', 34], ['arrows', 'ارتباطات', 28], ['company', 'شرکت', 24], ['gear', 'تنظيمات', 30]
    ];
    this.attachShadow({ mode: 'open' }).innerHTML = `
      <style>
        :host { display: flex; flex-direction: column; box-sizing: border-box; width: 157px; height: 560px; margin-left: 3px; border: 1px solid #6a92cc; border-top: 0; background: #bdd7fa; }
        .head { display: flex; align-items: center; box-sizing: border-box; height: 32px; padding: 0 5px 2px 2px; background: linear-gradient(#eaf2fe, #d2e3fb 45%, #b5d0f7); border-bottom: 1px solid #7fa5da; flex: none; }
        .split { height: 5px; flex: none; display: flex; align-items: center; justify-content: center; background: #d8e7fb; border-bottom: 1px solid #6f96cf; border-top: 1px solid #8fb0de; }
        .split i { width: 15px; border-top: 2px dotted #5472a3; }
        .item { display: flex; align-items: center; box-sizing: border-box; height: 25.62px; flex: none; padding-left: 10px; gap: 8px; background: linear-gradient(#d9e9fe 40%, #b1d0fa 45%, #c2dbfd); border-bottom: 1px solid #7299d2; }
        .on { font-weight: bold; color: #3c3423; background: linear-gradient(#ffd092 35%, #fca73b 42%, #ffdd79); }
        .more { flex: 1; display: flex; justify-content: flex-end; padding: 7px 2px 0; background: linear-gradient(#d9e9fe 35%, #b5d2fb 40%, #c2dbfd); }
      </style>
      <div class="head">${icon('coins', 25)}${label('حسابداري', 39, 'margin-left:37px')}${icon('pin', 9, 'margin-left:auto')}</div>
      <task-pane></task-pane>
      <div class="split"><i></i></div>
      ${groups.map(g => `<div class="item ${g[0] === 'coins' ? 'on' : ''}">${icon(g[0], 18)}${label(g[1], g[2])}</div>`).join('')}
      <div class="more">${icon('more', 11)}</div>`;
  }
}
customElements.define('nav-pane', NavPane);

class StatusBar extends HTMLElement {
  constructor() {
    super();
    this.attachShadow({ mode: 'open' }).innerHTML = `
      <style>
        :host { display: flex; align-items: center; direction: rtl; box-sizing: border-box; height: 23px; padding: 0 1px 0 4px; font-size: 10px;
          background: linear-gradient(#dfeafb 30%, #b8cff1 38%, #cfe0f8); border-bottom: 1px solid #26344e; border-top: 1px solid #e5effd; }
        .combo { display: flex; align-items: center; box-sizing: border-box; width: 97px; height: 18px; padding-right: 57px; margin-right: 12px; background: #eaf2fe; border: 1px solid #a9c4eb; color: #182a4d; }
      </style>
      ${label('نام کاربر: سرپرست', 71)}${label('ارز پايه :', 31, 'margin-right:67px')}${label('ريال', 17, 'margin-right:10px')}${label('سال مالي:', 41, 'margin-right:21px')}
      <div class="combo">${label('1396', 21)}${icon('down', 8, 'margin-right:6px')}</div>
      ${label('امروز :', 25, 'margin-right:17px')}${label('98/11/16', 38, 'margin-right:9px')}${label('کد مشتري:', 42, 'margin-right:19px')}${label('1111700', 36, 'margin-right:9px')}${label('نسخه:', 25, 'margin-right:15px')}${label('5.3.4', 20, 'margin-right:9px')}
      ${label('پشتيباني و آموزش', 71, 'margin-right:auto;color:#3a2fc4;-webkit-text-stroke:.2px')}`;
  }
}
customElements.define('status-bar', StatusBar);

class SepidarApp extends HTMLElement {
  constructor() {
    super();
    this.attachShadow({ mode: 'open' }).innerHTML = `
      <style>
        :host { display: flex; flex-direction: column; width: 921px; height: 668px; background: #6d96d0; }
        .work { display: flex; height: 561px; }
        doc-window { margin-top: 2px; }
        .desk { height: 23px; padding: 2px 0 0 4px; flex: none; box-sizing: border-box; }
        .desk div { display: flex; align-items: center; justify-content: center; box-sizing: border-box; width: 34px; height: 17px; background: #d3e4f8; border: 1px solid #b9d0ef; color: #23406f; }
      </style>
      <app-header></app-header>
      <div class="work"><doc-window></doc-window><nav-pane></nav-pane></div>
      <div class="desk"><div>${label('ميز کار', 24)}</div></div>
      <status-bar></status-bar>`;
  }
}
customElements.define('sepidar-app', SepidarApp);
</script>
</body>
</html>
